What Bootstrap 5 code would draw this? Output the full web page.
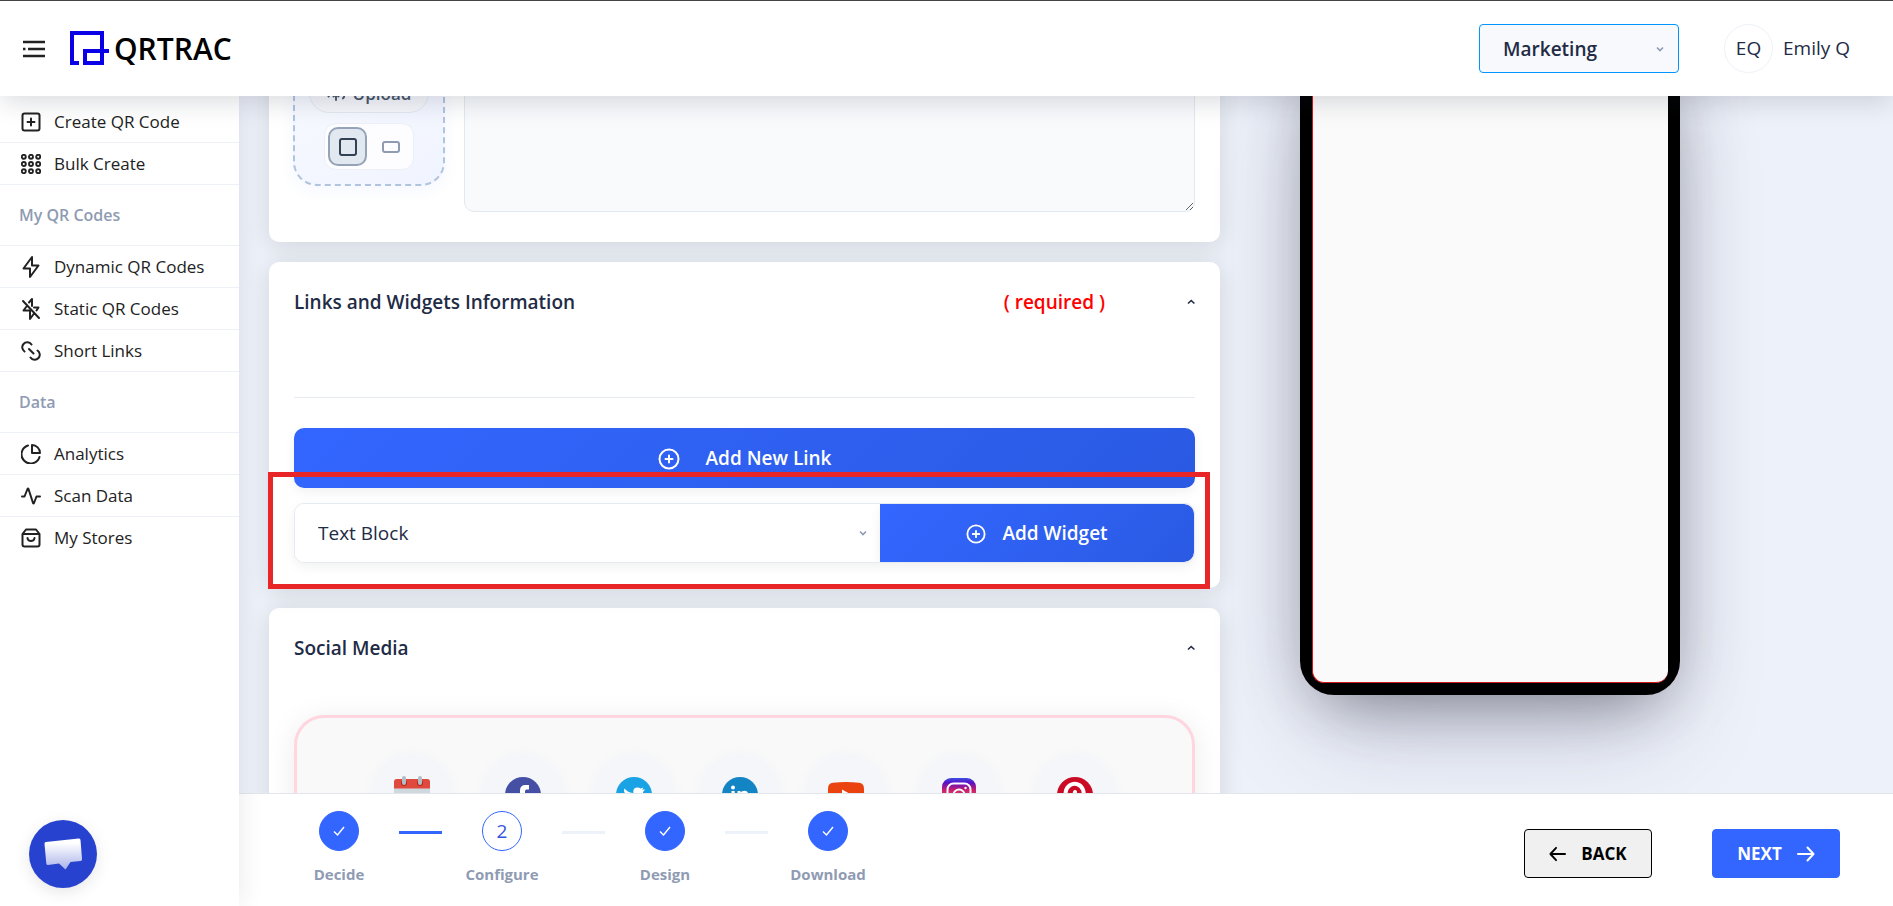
<!DOCTYPE html>
<html lang="en">
<head>
<meta charset="utf-8">
<meta name="viewport" content="width=device-width, initial-scale=1">
<title>QRTRAC</title>
<link href="https://cdn.jsdelivr.net/npm/bootstrap@5.3.0/dist/css/bootstrap.min.css" rel="stylesheet">
<style>
:root{--brand:#3366ff;--ink:#222b45;--muted:#8f9bb3;--line:#e4e9f2}
body{font-family:"Open Sans","Noto Sans",sans-serif;color:var(--ink);background:#edf1f9;font-size:19px}
svg{display:block;flex:none}
.topbar{height:96px;border-top:1px solid #444;padding:0 43px 0 22px;z-index:30;box-shadow:0 8px 24px -2px rgba(30,40,60,.16)}
.wordmark{margin-left:5px;font-size:30px;line-height:40px;font-weight:600;color:#000}
.team-select{width:200px;height:49px;padding:2px 24px 0 23px;font-size:19px;font-weight:600;color:var(--ink);background-color:#f7f9fc;border:1px solid #0095ff;border-radius:4px;background-position:right 12px center}
.form-select{--bs-form-select-bg-img:url("data:image/svg+xml,%3csvg xmlns='http://www.w3.org/2000/svg' viewBox='0 0 12 12'%3e%3cpath fill='none' stroke='%238f9bb3' stroke-width='1.6' d='m3 4.500 3 3 3-3'/%3e%3c/svg%3e");background-size:12px 12px}
.avatar{width:49px;height:49px;border:1px solid #edf1f7;margin-left:45px}
.user-name{margin-left:10px}
.sidebar{width:239px;z-index:20;box-shadow:0 0 24px rgba(30,40,60,.1);padding-top:5px}
.side-link{height:42px;padding-left:21px;gap:13px;font-size:17px;color:#222;text-decoration:none;border-bottom:1px solid #edf1f7}
.side-end{border-bottom:0}
.side-head{height:61px;padding-left:19px;font-size:16px;font-weight:600;color:var(--muted);border-bottom:1px solid #edf1f7}
.chat{width:68px;height:68px;margin:0 0 18px 29px;background:#2842d0;box-shadow:0 4px 16px rgba(0,0,0,.1)}
.workspace{display:grid;grid-template-columns:minmax(0,1fr) 380px;gap:80px;padding:0 213px 0 30px}
.panel{background:#fff;border-radius:10px;padding:25px;box-shadow:0 4px 24px rgba(20,30,20,.13)}
.panel-first{margin-top:-50px;padding:16px 25px 30px 24px}
.panel-title{font-size:19px;line-height:30px;font-weight:600;margin:0}
.req{color:#f00;font-weight:600;line-height:30px;margin-right:80px}
.fold{padding:0;border:0;background:none;color:var(--ink)}
.drop{width:152px;border:2px dashed #b0c4de;border-radius:24px;padding:9px 14px 14px;background:linear-gradient(145deg,#f8faff,#f0f4ff);box-shadow:0 4px 16px rgba(51,102,255,.05)}
.up-btn{width:120px;height:40px;font-size:17px;font-weight:600;line-height:20px;color:#475569;background:#f4f6fa;border:1px solid #e2e8f0;border-radius:20px;padding:2px 0 0}
.ratio-set{height:47px;margin-top:10px;padding:3px;background:#fdfdff;border:1px solid #edf0f7;border-radius:12px}
.ratio-set .btn{width:39px;height:39px;padding:0;border:2px solid transparent;border-radius:10px;color:#8f9bb3}
.ratio-set .btn-check:checked+.btn{background:#e2e8f0;border-color:#94a3b8;color:#334155}
.about{height:150px;margin-left:19px;background:#f8fafc;border:1px solid #e2e8f0;border-radius:10px;resize:vertical}
.rule{margin:80px 0 30px;border-top:1px solid var(--line);opacity:1}
.cta{height:60px;padding-top:2px;font-size:19px;font-weight:600;color:#fff;border:0;border-radius:10px;background:linear-gradient(135deg,#3366ff,#2a5ae3);box-shadow:0 4px 12px rgba(0,0,0,.06)}
.widget-row{height:60px;margin-top:15px;border:1px solid var(--line);border-radius:10px;box-shadow:0 4px 12px rgba(0,0,0,.06);overflow:hidden}
.widget-select{height:58px;border:0;padding-left:23px;font-size:19px;color:var(--ink);background-position:right 11px center;border-radius:0}
.widget-btn{width:314px;height:58px;border-radius:0 10px 10px 0}
.marker{position:absolute;left:-1px;right:10px;top:210px;bottom:-1px;border:5px solid #e82628;pointer-events:none}
.socials{margin-top:52px;height:240px;padding-top:37px;border:3px solid #ffd6e0;border-radius:30px;background:#f9f9f9;box-shadow:0 4px 30px rgba(0,0,0,.08)}
.soc{width:111px;height:80px;padding:0;border:0;background:none}
.soc-narrow{width:101px}
.soc-wide{width:116px}
.soc span{width:80px;height:80px;background:#f4f6fa;box-shadow:0 0 10px rgba(240,243,250,.9)}
.phone{height:649px;margin-top:-50px;background:#000;border-radius:34px;padding:12px;box-shadow:0 50px 100px -20px rgba(50,50,93,.25),0 30px 60px -30px rgba(0,0,0,.3),0 0 70px rgba(40,45,60,.2)}
.phone-screen{background:#fafafa;border:solid #d01818;border-width:0 0 1px 1px;border-radius:12px}
.dock{height:113px;background:#fff;border-top:1px solid #e2e5ea;padding:17px 53px 0 40px;z-index:10}
.step{width:120px}
.dot{width:40px;height:40px;background:var(--brand);color:#fff;border:1px solid var(--brand);line-height:38px}
.dot-now{background:#fff;color:#3355dd}
.step-name{margin-top:12px;font-size:15px;line-height:22px;font-weight:700;color:var(--muted)}
.bar{width:43px;height:3px;margin-top:20px;background:#edf1f9}
.bar-done{background:var(--brand)}
.nav-btn{width:128px;height:49px;margin-top:18px;gap:15px;font-size:17px;font-weight:700;border-radius:4px;padding:0;background:#f0f0f0;border:1px solid #000;color:#000}
.nav-next{background:var(--brand);border-color:var(--brand);color:#fff}
</style>
</head>
<body class="vh-100 d-flex flex-column overflow-hidden">
<header class="topbar bg-white d-flex align-items-center position-relative flex-shrink-0">
  <button class="btn p-0 border-0" aria-label="Menu"><svg width="24" height="18" viewBox="0 0 24 18" stroke="#222" stroke-width="2.400" fill="none"><path d="M1 2h22M6 9h17M1 16h22M1 9h2.500"/></svg></button>
  <a href="#" class="d-flex align-items-center text-decoration-none ms-4">
    <svg width="39" height="35" viewBox="0 0 39 35" fill="none" stroke="#0a00e6" stroke-width="4"><path d="M9 32H2V2h30v30H15V20h24"/></svg>
    <span class="wordmark">QRTRAC</span></a>
  <div class="ms-auto d-flex align-items-center">
    <select class="form-select team-select" aria-label="Team"><option>Marketing</option></select>
    <span class="avatar rounded-circle d-flex align-items-center justify-content-center">EQ</span>
    <span class="user-name">Emily Q</span>
  </div>
</header>

<div class="d-flex flex-grow-1" style="min-height:0">
  <nav class="sidebar bg-white d-flex flex-column position-relative flex-shrink-0">
    <a href="#" class="side-link d-flex align-items-center"><svg width="20" height="20" viewBox="0 0 20 20" fill="none" stroke="#222" stroke-width="2" stroke-linecap="round"><rect x="1.500" y="1.500" width="17" height="17" rx="2"/><path d="M10 6.500v7M6.500 10h7"/></svg>Create QR Code</a>
    <a href="#" class="side-link d-flex align-items-center"><svg width="20" height="20" viewBox="0 0 20 20" fill="none" stroke="#222" stroke-width="1.900"><circle cx="2.800" cy="2.800" r="2"/><circle cx="10" cy="2.800" r="2"/><circle cx="17.200" cy="2.800" r="2"/><circle cx="2.800" cy="10" r="2"/><circle cx="10" cy="10" r="2"/><circle cx="17.200" cy="10" r="2"/><circle cx="2.800" cy="17.200" r="2"/><circle cx="10" cy="17.200" r="2"/><circle cx="17.200" cy="17.200" r="2"/></svg>Bulk Create</a>
    <div class="side-head d-flex align-items-center">My QR Codes</div>
    <a href="#" class="side-link d-flex align-items-center"><svg width="20" height="24" viewBox="0 0 20 24" fill="none" stroke="#222" stroke-width="2" stroke-linejoin="round"><path d="M11 2 2.500 13.500H9L9 22l8.500-11.500H11z"/></svg>Dynamic QR Codes</a>
    <a href="#" class="side-link d-flex align-items-center"><svg width="20" height="24" viewBox="0 0 20 24" fill="none" stroke="#222" stroke-width="2" stroke-linejoin="round" stroke-linecap="round"><path d="M8 5.500 11 2v7M13 10.500h4.500l-2 3M5.500 9.500l-3 4H9V22l4-5.500M2 4l16 17"/></svg>Static QR Codes</a>
    <a href="#" class="side-link d-flex align-items-center"><svg width="20" height="20" viewBox="0 0 20 20" fill="none" stroke="#222" stroke-width="2" stroke-linecap="round"><path d="M3.500 10.500A5 5 0 0 1 2.500 3 5 5 0 0 1 10.500 3.500M16.500 9.500a5 5 0 0 1 1 7.500 5 5 0 0 1-8-.500M8 8l4.500 4.500"/></svg>Short Links</a>
    <div class="side-head d-flex align-items-center">Data</div>
    <a href="#" class="side-link d-flex align-items-center"><svg width="20" height="20" viewBox="0 0 20 20" fill="none" stroke="#222" stroke-width="2" stroke-linejoin="round" stroke-linecap="round"><path d="M11 1v8h8a8 8 0 0 0-8-8zM7 1.500a9.200 9.200 0 1 0 11.500 11.500"/></svg>Analytics</a>
    <a href="#" class="side-link d-flex align-items-center"><svg width="20" height="20" viewBox="0 0 20 20" fill="none" stroke="#222" stroke-width="2" stroke-linejoin="round" stroke-linecap="round"><path d="M1 10.500h2.500L6.500 3q.5-1 1 0l4.500 14q.5 1 1 0l2.500-6.500H19"/></svg>Scan Data</a>
    <a href="#" class="side-link side-end d-flex align-items-center"><svg width="20" height="20" viewBox="0 0 20 20" fill="none" stroke="#222" stroke-width="2" stroke-linejoin="round" stroke-linecap="round"><path d="M1.500 6 5 1.500h10L18.500 6v10.500a2 2 0 0 1-2 2h-13a2 2 0 0 1-2-2zM1.500 6h17M6.500 10a3.500 3 0 0 0 7 0"/></svg>My Stores</a>
    <button class="chat btn p-0 border-0 rounded-circle mt-auto d-flex align-items-center justify-content-center" aria-label="Chat"><svg width="40" height="34" viewBox="0 0 40 34"><defs><linearGradient id="bub" x1="0" y1="0" x2="0" y2="1"><stop offset=".15" stop-color="#fff"/><stop offset="1" stop-color="#a9b2ea"/></linearGradient></defs><path fill="url(#bub)" d="M3 5 35.500 1.500q2-.2 2 1.500l1.500 19q.2 2-1.500 2L27.500 25 22.500 32.500 16 26.500 5 28q-1.500 0-1.700-1.500L1.500 7Q1.300 5.200 3 5z"/></svg></button>
  </nav>

  <div class="flex-grow-1 d-flex flex-column" style="min-width:0">
    <main class="workspace flex-grow-1 overflow-hidden" style="min-height:0">
      <div class="d-flex flex-column" style="gap:20px">
        <section class="panel panel-first d-flex align-items-start">
          <div class="drop flex-shrink-0 d-flex flex-column align-items-center">
            <button class="up-btn d-flex align-items-center justify-content-center gap-2"><svg width="18" height="18" viewBox="0 0 24 24" fill="none" stroke="currentColor" stroke-width="2.500"><path d="m16 16-4-4-4 4M12 12v9M20.400 18.400A5 5 0 0 0 18 9h-1.300A8 8 0 1 0 3 16.300"/></svg>Upload</button>
            <div class="ratio-set d-flex gap-1">
              <input class="btn-check" type="radio" name="shape" id="sq" checked><label class="btn d-flex align-items-center justify-content-center" for="sq" aria-label="Square"><svg width="18" height="18" fill="none" stroke="currentColor" stroke-width="2"><rect x="1" y="1" width="16" height="16" rx="2"/></svg></label>
              <input class="btn-check" type="radio" name="shape" id="wide"><label class="btn d-flex align-items-center justify-content-center" for="wide" aria-label="Wide"><svg width="18" height="12" fill="none" stroke="currentColor" stroke-width="2"><rect x="1" y="1" width="16" height="10" rx="2"/></svg></label>
            </div>
          </div>
          <textarea class="about form-control" aria-label="Description"></textarea>
        </section>

        <section class="panel position-relative">
          <div class="d-flex align-items-center">
            <h2 class="panel-title">Links and Widgets Information</h2>
            <span class="req ms-auto">( required )</span>
            <button class="fold" aria-label="Collapse links"><svg width="10" height="10" viewBox="0 0 10 10" fill="none" stroke="currentColor" stroke-width="1.600"><path d="m3 6.500 3.200-3 3.200 3"/></svg></button>
          </div>
          <hr class="rule">
          <button class="cta w-100 d-flex align-items-center justify-content-center" style="gap:26px"><svg width="22" height="22" viewBox="0 0 22 22" fill="none" stroke="#fff" stroke-width="2" stroke-linecap="round"><circle cx="11" cy="11" r="9.500"/><path d="M11 7.500v7M7.500 11h7"/></svg>Add New Link</button>
          <div class="widget-row d-flex">
            <select class="form-select widget-select flex-grow-1" aria-label="Widget type"><option>Text Block</option></select>
            <button class="cta widget-btn flex-shrink-0 d-flex align-items-center justify-content-center gap-3"><svg width="20" height="20" viewBox="0 0 22 22" fill="none" stroke="#fff" stroke-width="2" stroke-linecap="round"><circle cx="11" cy="11" r="9.500"/><path d="M11 7.500v7M7.500 11h7"/></svg>Add Widget</button>
          </div>
          <div class="marker"></div>
        </section>

        <section class="panel">
          <div class="d-flex align-items-center justify-content-between">
            <h2 class="panel-title">Social Media</h2>
            <button class="fold" aria-label="Collapse social media"><svg width="10" height="10" viewBox="0 0 10 10" fill="none" stroke="currentColor" stroke-width="1.600"><path d="m3 6.500 3.200-3 3.200 3"/></svg></button>
          </div>
          <div class="socials d-flex justify-content-center">
            <button class="soc" aria-label="Calendar"><span class="rounded-circle d-flex align-items-center justify-content-center mx-auto"><svg width="36" height="38" viewBox="0 0 36 38"><rect y="3" width="36" height="34" rx="3" fill="#cfd8dc"/><path fill="#e0493e" d="M0 12.500V6q0-3 3-3h30q3 0 3 3v6.500z"/><circle cx="10" cy="7" r="3" fill="#b3261e"/><circle cx="26" cy="7" r="3" fill="#b3261e"/><rect x="8" width="4" height="9" rx="2" fill="#b0bec5"/><rect x="24" width="4" height="9" rx="2" fill="#b0bec5"/></svg></span></button>
            <button class="soc" aria-label="Facebook"><span class="rounded-circle d-flex align-items-center justify-content-center mx-auto"><svg width="36" height="36" viewBox="0 0 36 36"><circle cx="18" cy="18" r="18" fill="#4550a5"/><path fill="#fff" d="M24 8v4.500h-2.500q-1.500 0-1.500 2V18h4l-.6 5H20v12h-5V23h-3v-5h3v-4.500Q15 8 20.500 8z"/></svg></span></button>
            <button class="soc" aria-label="Twitter"><span class="rounded-circle d-flex align-items-center justify-content-center mx-auto"><svg width="36" height="36" viewBox="0 0 36 36"><circle cx="18" cy="18" r="18" fill="#1aa3e4"/><path fill="#fff" d="M29 12.500l-2 2.500q0 13-13 13-4 0-7-2 4 0 6-1.500-3-1-3.500-3h2q-3.500-1.500-3.500-4.500l2 .5q-3-3-1.500-6 4 4.500 9 4.500-1-5.500 4-5.500 2 0 3 1l3-1-1.500 2z"/></svg></span></button>
            <button class="soc soc-narrow" aria-label="LinkedIn"><span class="rounded-circle d-flex align-items-center justify-content-center mx-auto"><svg width="36" height="36" viewBox="0 0 36 36"><circle cx="18" cy="18" r="18" fill="#1485c4"/><circle cx="11" cy="10.500" r="2" fill="#fff"/><path fill="#fff" d="M9.500 14h3.200v12H9.500zM15.500 14h3v1.500q1.300-1.800 3.800-1.800 4.200 0 4.200 5V26h-3.200v-6.500q0-3-2.200-3t-2.400 3V26h-3.200z"/></svg></span></button>
            <button class="soc" aria-label="YouTube"><span class="rounded-circle d-flex align-items-center justify-content-center mx-auto"><svg width="36" height="26" viewBox="0 0 36 26"><path fill="#eb4310" d="M5 .7q13-1.400 26 0 5 .5 5 6v13q0 5-5 5.600-13 1.400-26 0-5-.6-5-5.600v-13q0-5.500 5-6z"/><path fill="#fff" d="M14 7.500 24 13l-10 5.500z"/></svg></span></button>
            <button class="soc soc-wide" aria-label="Instagram"><span class="rounded-circle d-flex align-items-center justify-content-center mx-auto"><svg width="34" height="34" viewBox="0 0 34 34"><defs><linearGradient id="ig" x1="0" y1="0" x2="0" y2="1"><stop stop-color="#3c50e0"/><stop offset=".14" stop-color="#5a0fc8"/><stop offset=".35" stop-color="#c81e6e"/><stop offset="1" stop-color="#f9a03f"/></linearGradient></defs><rect width="34" height="34" rx="9" fill="url(#ig)"/><rect x="5.500" y="5.500" width="23" height="23" rx="6" fill="none" stroke="#fff" stroke-width="2"/><circle cx="17" cy="17" r="5.500" fill="none" stroke="#fff" stroke-width="2"/><circle cx="23.500" cy="10" r="1.200" fill="#fff"/></svg></span></button>
            <button class="soc soc-wide" aria-label="Pinterest"><span class="rounded-circle d-flex align-items-center justify-content-center mx-auto"><svg width="36" height="36" viewBox="0 0 36 36"><circle cx="18" cy="18" r="18" fill="#cb0a25"/><path fill="none" stroke="#fff" stroke-width="4" stroke-linecap="round" d="M10.500 22a9 9.500 0 1 1 9 3.500l-2-1.500M18 15l-4 15"/></svg></span></button>
          </div>
        </section>
      </div>
      <aside><div class="phone"><div class="phone-screen h-100"></div></div></aside>
    </main>

    <footer class="dock d-flex align-items-start justify-content-between position-relative flex-shrink-0">
      <div class="d-flex align-items-start">
        <div class="step text-center"><div class="dot rounded-circle mx-auto d-flex align-items-center justify-content-center"><svg width="12" height="10" viewBox="0 0 12 10" fill="none" stroke="#fff" stroke-width="1.400"><path d="m1 5.500 3.500 3.500L11 1"/></svg></div><div class="step-name">Decide</div></div>
        <div class="bar bar-done"></div>
        <div class="step text-center"><div class="dot dot-now rounded-circle mx-auto">2</div><div class="step-name">Configure</div></div>
        <div class="bar"></div>
        <div class="step text-center"><div class="dot rounded-circle mx-auto d-flex align-items-center justify-content-center"><svg width="12" height="10" viewBox="0 0 12 10" fill="none" stroke="#fff" stroke-width="1.400"><path d="m1 5.500 3.500 3.500L11 1"/></svg></div><div class="step-name">Design</div></div>
        <div class="bar"></div>
        <div class="step text-center"><div class="dot rounded-circle mx-auto d-flex align-items-center justify-content-center"><svg width="12" height="10" viewBox="0 0 12 10" fill="none" stroke="#fff" stroke-width="1.400"><path d="m1 5.500 3.500 3.500L11 1"/></svg></div><div class="step-name">Download</div></div>
      </div>
      <div class="d-flex" style="gap:60px">
        <button class="nav-btn d-flex align-items-center justify-content-center"><svg width="17" height="16" viewBox="0 0 18 16" fill="none" stroke="currentColor" stroke-width="2" stroke-linecap="round" stroke-linejoin="round"><path d="M17 8H1.500M7.500 1.500 1.500 8l6 6.500"/></svg>BACK</button>
        <button class="nav-btn nav-next d-flex align-items-center justify-content-center">NEXT<svg width="18" height="16" viewBox="0 0 18 16" fill="none" stroke="currentColor" stroke-width="2" stroke-linecap="round" stroke-linejoin="round"><path d="M1 8h15.500M10.500 1.500l6 6.500-6 6.500"/></svg></button>
      </div>
    </footer>
  </div>
</div>
<script src="https://cdn.jsdelivr.net/npm/bootstrap@5.3.0/dist/js/bootstrap.bundle.min.js"></script>
</body>
</html>
